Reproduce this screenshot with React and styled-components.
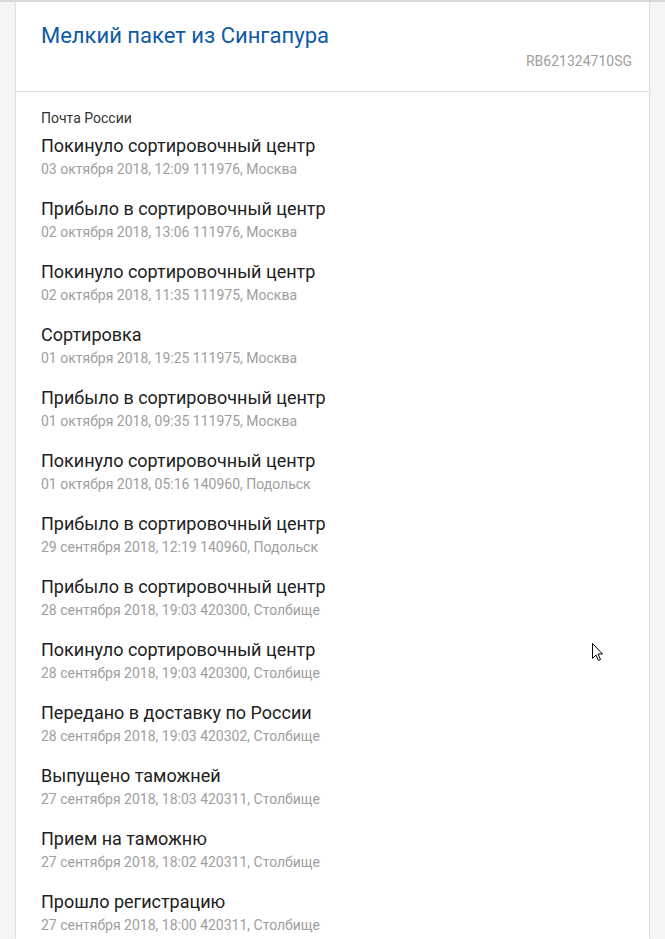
import React from 'react';
import styled, { createGlobalStyle } from 'styled-components';

const GlobalStyle = createGlobalStyle`
  html, body {
    margin: 0;
    padding: 0;
    background: #f5f5f5;
    font-family: Roboto, 'Liberation Sans', Arial, sans-serif;
  }
  body {
    border-top: 2px solid #d9d9d9;
  }
`;

const Page = styled.div`
  position: relative;
  height: 937px;
  overflow: hidden;
`;

const Card = styled.div`
  margin-left: 16px;
  width: 633px;
  min-height: 100%;
  background: #fff;
  box-shadow: 0 0 2px rgba(0, 0, 0, 0.25);
`;

const Header = styled.div`
  padding: 21px 17px 22px 25px;
  border-bottom: 1px solid #e3e3e3;
`;

const Title = styled.h1`
  margin: 0;
  font-size: 22px;
  line-height: 26px;
  font-weight: 400;
  color: #0d5aa7;
`;

const TrackNumber = styled.div`
  margin-top: 4px;
  text-align: right;
  font-size: 14px;
  line-height: 16px;
  color: #9e9e9e;
`;

const Body = styled.div`
  padding: 18px 25px 0;
`;

const Carrier = styled.div`
  font-size: 14px;
  line-height: 16px;
  color: #333;
  margin-bottom: 9px;
`;

const EventList = styled.ul`
  list-style: none;
  margin: 0;
  padding: 0;
  display: flex;
  flex-direction: column;
  gap: 21px;
`;

const Event = styled.li`
  display: flex;
  flex-direction: column;
  gap: 4px;
`;

const EventTitle = styled.div`
  font-size: 18px;
  line-height: 22px;
  color: #212121;
`;

const EventMeta = styled.div`
  font-size: 14px;
  line-height: 16px;
  color: #9e9e9e;
`;

const Cursor = styled.svg`
  position: absolute;
  left: 592px;
  top: 641px;
`;

const events = [
  ['Покинуло сортировочный центр', '03 октября 2018, 12:09 111976, Москва'],
  ['Прибыло в сортировочный центр', '02 октября 2018, 13:06 111976, Москва'],
  ['Покинуло сортировочный центр', '02 октября 2018, 11:35 111975, Москва'],
  ['Сортировка', '01 октября 2018, 19:25 111975, Москва'],
  ['Прибыло в сортировочный центр', '01 октября 2018, 09:35 111975, Москва'],
  ['Покинуло сортировочный центр', '01 октября 2018, 05:16 140960, Подольск'],
  ['Прибыло в сортировочный центр', '29 сентября 2018, 12:19 140960, Подольск'],
  ['Прибыло в сортировочный центр', '28 сентября 2018, 19:03 420300, Столбище'],
  ['Покинуло сортировочный центр', '28 сентября 2018, 19:03 420300, Столбище'],
  ['Передано в доставку по России', '28 сентября 2018, 19:03 420302, Столбище'],
  ['Выпущено таможней', '27 сентября 2018, 18:03 420311, Столбище'],
  ['Прием на таможню', '27 сентября 2018, 18:02 420311, Столбище'],
  ['Прошло регистрацию', '27 сентября 2018, 18:00 420311, Столбище'],
];

export default function App() {
  return (
    <Page>
      <GlobalStyle />
      <Card>
        <Header>
          <Title>Мелкий пакет из Сингапура</Title>
          <TrackNumber>RB621324710SG</TrackNumber>
        </Header>
        <Body>
          <Carrier>Почта России</Carrier>
          <EventList>
            {events.map(([title, meta], i) => (
              <Event key={i}>
                <EventTitle>{title}</EventTitle>
                <EventMeta>{meta}</EventMeta>
              </Event>
            ))}
          </EventList>
        </Body>
      </Card>
      <Cursor width="12" height="19" viewBox="0 0 12 19">
        <path d="M0.5 0.5 L0.5 15.5 L4 12 L6.5 17.5 L8.5 16.5 L6 11 L10.5 11 Z" fill="#fff" stroke="#000" strokeWidth="1" />
      </Cursor>
    </Page>
  );
}
